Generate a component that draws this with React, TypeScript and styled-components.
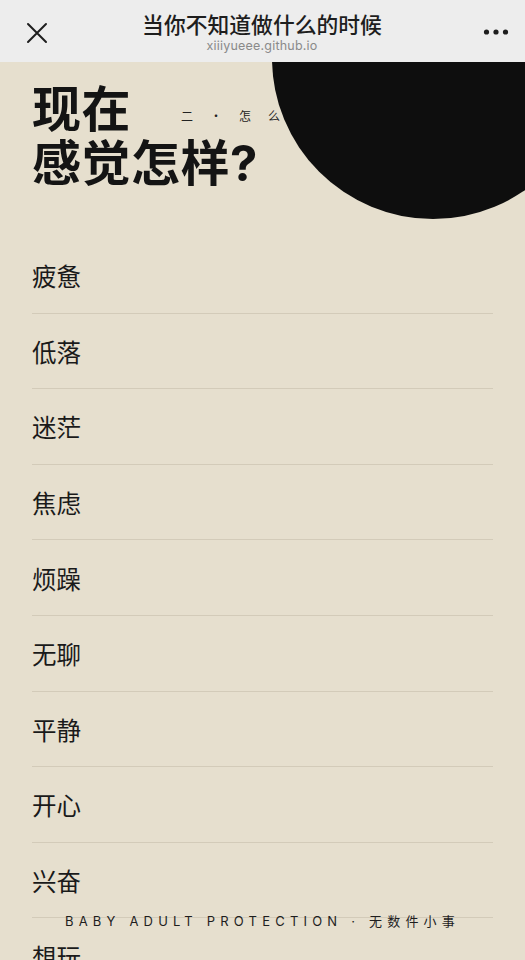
import React from "react";
import styled, { createGlobalStyle } from "styled-components";

const moods = ["疲惫", "低落", "迷茫", "焦虑", "烦躁", "无聊", "平静", "开心", "兴奋", "想玩", "想哭", "睡不着"];

const GlobalStyle = createGlobalStyle`
  html, body {
    margin: 0;
    padding: 0;
    background: #e6dfce;
  }
  body {
    font-family: "Inter", "Noto Sans CJK SC", sans-serif;
    color: #161616;
  }
`;

export default function App() {
  return (
    <>
      <GlobalStyle />
      <Page>
        <TopBar>
          <BarButton aria-label="close">
            <svg width="22" height="22" viewBox="0 0 22 22">
              <path d="M2 2 L20 20 M20 2 L2 20" stroke="#1e1e1e" strokeWidth="2" strokeLinecap="round" fill="none" />
            </svg>
          </BarButton>
          <TitleBlock>
            <Title>当你不知道做什么的时候</Title>
            <Domain>xiiiyueee.github.io</Domain>
          </TitleBlock>
          <BarButton aria-label="more">
            <svg width="26" height="8" viewBox="0 0 26 8">
              <circle cx="3.5" cy="4" r="2.6" fill="#1e1e1e" />
              <circle cx="13" cy="4" r="2.6" fill="#1e1e1e" />
              <circle cx="22.5" cy="4" r="2.6" fill="#1e1e1e" />
            </svg>
          </BarButton>
        </TopBar>

        <Content>
          <Heading>
            <HeadLine>
              现在
              <StepLabel>二·怎么样</StepLabel>
            </HeadLine>
            <HeadLine>感觉怎样?</HeadLine>
          </Heading>
          <Circle />

          <MoodList>
            {moods.map((m) => (
              <MoodItem key={m}>{m}</MoodItem>
            ))}
          </MoodList>
        </Content>

        <Footer>BABY ADULT PROTECTION · 无数件小事</Footer>
      </Page>
    </>
  );
}

const Page = styled.div`
  position: relative;
  height: 100vh;
  display: flex;
  flex-direction: column;
  overflow: hidden;
`;

const TopBar = styled.header`
  height: 62px;
  flex: none;
  box-sizing: border-box;
  background: #ededed;
  display: flex;
  align-items: center;
  justify-content: space-between;
  padding: 0 14px 0 25px;
  position: relative;
  z-index: 2;
`;

const BarButton = styled.div`
  width: 24px;
  height: 24px;
  display: flex;
  align-items: center;
  justify-content: center;
  margin-top: 4px;

  &:last-child {
    width: 30px;
    margin-top: 2px;
  }
`;

const TitleBlock = styled.div`
  display: flex;
  flex-direction: column;
  align-items: center;
  margin-right: 6px;
  margin-top: 3px;
`;

const Title = styled.div`
  font-family: "Noto Sans CJK SC", sans-serif;
  font-size: 21.8px;
  font-weight: 500;
  line-height: 26px;
  color: #1e1e1e;
`;

const Domain = styled.div`
  font-family: "Inter", "Liberation Sans", sans-serif;
  font-size: 12.5px;
  line-height: 16px;
  margin-top: 1px;
  color: #8a8a8a;
  letter-spacing: 0.2px;
`;

const Content = styled.main`
  position: relative;
  flex: 1;
  overflow: hidden;
  padding: 21px 32px 0 32px;
`;

const Heading = styled.h1`
  margin: 0;
  font-family: "Inter", "Noto Sans CJK SC", sans-serif;
  font-size: 49px;
  font-weight: 700;
  line-height: 54px;
  color: #141414;
  letter-spacing: 0.5px;
  white-space: nowrap;
`;

const HeadLine = styled.div`
  display: flex;
  align-items: center;
  height: 54px;
`;

const StepLabel = styled.span`
  font-family: "Noto Sans CJK SC", sans-serif;
  font-size: 12px;
  font-weight: 400;
  letter-spacing: 17px;
  line-height: 20px;
  margin-left: 50px;
  margin-top: 12px;
  color: #222;
`;

const Circle = styled.div`
  position: absolute;
  top: -165px;
  left: 272px;
  width: 322px;
  height: 322px;
  border-radius: 50%;
  background: #0e0e0e;
  z-index: 1;
`;

const MoodList = styled.ul`
  list-style: none;
  margin: 47px 0 0 0;
  padding: 0;
`;

const MoodItem = styled.li`
  box-sizing: border-box;
  height: 75.6px;
  display: flex;
  align-items: center;
  border-bottom: 1.5px solid #d3cbb9;
  font-family: "Noto Sans CJK SC", sans-serif;
  font-size: 24.5px;
  font-weight: 400;
  color: #1a1a1a;
  padding-top: 1px;
`;

const Footer = styled.div`
  position: absolute;
  left: 0;
  right: 0;
  bottom: 29px;
  text-align: center;
  font-family: "Inter", "Noto Sans CJK SC", sans-serif;
  font-size: 13px;
  line-height: 20px;
  letter-spacing: 5.2px;
  color: #1e1e1e;
  padding-left: 0;
  z-index: 3;
`;
